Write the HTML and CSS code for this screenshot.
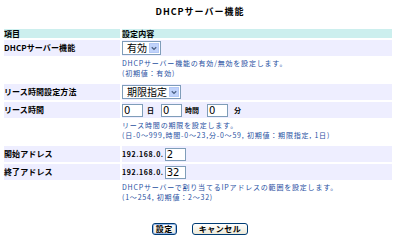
FILE: index.html
```html
<!DOCTYPE html>
<html lang="ja">
<head>
    <meta charset="UTF-8">
    <title>DHCPサーバー機能</title>
    <link rel="stylesheet" href="styles.css">
</head>
<body>
    <h1 class="title">DHCPサーバー機能</h1>

    <table class="settings">
        <tr class="head">
            <td class="label">項目</td>
            <td>設定内容</td>
        </tr>

        <!-- DHCP on/off -->
        <tr class="row">
            <td class="label">DHCPサーバー機能</td>
            <td>
                <span class="select"><span class="select-text">有効</span><span class="select-arrow"><svg width="9" height="9" viewBox="0 0 9 9"><path d="M2 3 L4.5 5.5 L7 3" fill="none" stroke="#4d6185" stroke-width="1.5"/></svg></span></span>
            </td>
        </tr>
        <tr class="desc-row">
            <td></td>
            <td class="desc">DHCPサーバー機能の有効/無効を設定します。<br>(初期値：有効)</td>
        </tr>

        <!-- lease time -->
        <tr class="row">
            <td class="label">リース時間設定方法</td>
            <td>
                <span class="select"><span class="select-text">期限指定</span><span class="select-arrow"><svg width="9" height="9" viewBox="0 0 9 9"><path d="M2 3 L4.5 5.5 L7 3" fill="none" stroke="#4d6185" stroke-width="1.5"/></svg></span></span>
            </td>
        </tr>
        <tr class="row">
            <td class="label">リース時間</td>
            <td>
                <div class="lease">
                    <span class="field">0</span><span class="unit unit-day">日</span>
                    <span class="field">0</span><span class="unit unit-hour">時間</span>
                    <span class="field">0</span><span class="unit unit-min">分</span>
                </div>
            </td>
        </tr>
        <tr class="desc-row">
            <td></td>
            <td class="desc">リース時間の期限を設定します。<br>(日-0～999,時間-0～23,分-0～59, 初期値：期限指定, 1日)</td>
        </tr>

        <!-- address range -->
        <tr class="row">
            <td class="label">開始アドレス</td>
            <td><span class="ip">192.168.0.</span><span class="field">2</span></td>
        </tr>
        <tr class="row">
            <td class="label">終了アドレス</td>
            <td><span class="ip">192.168.0.</span><span class="field">32</span></td>
        </tr>
        <tr class="desc-row">
            <td></td>
            <td class="desc">DHCPサーバーで割り当てるIPアドレスの範囲を設定します。<br>(1～254, 初期値：2～32)</td>
        </tr>
    </table>

    <div class="buttons">
        <button class="btn btn-focus">設定</button>
        <button class="btn btn-cancel">キャンセル</button>
    </div>
</body>
</html>
```

FILE: styles.css
```css
body {
    margin: 0;
    background: #ffffff;
    color: #000000;
    font-family: "Noto Sans CJK JP", "DejaVu Sans", sans-serif;
    font-size: 8px;
}

.title {
    margin: 0;
    padding-top: 6px;
    height: 21px;
    text-align: center;
    font-size: 9px;
    letter-spacing: 1px;
    line-height: 12px;
}

.settings {
    margin-left: 2px;
    width: 392px;
    border-spacing: 2px;
    letter-spacing: 0.1px;
}

.settings td {
    padding: 0;
    vertical-align: middle;
}

.settings .label {
    width: 116px;
    font-weight: bold;
}

.head td {
    background: #ccefee;
    height: 9px;
    line-height: 9px;
    font-weight: bold;
}

.row td {
    background: #eeeeff;
    height: 16px;
    line-height: 12px;
}

.desc-row td {
    vertical-align: top;
}

.desc {
    color: #1f4f9f;
    font-size: 7px;
    letter-spacing: 0.8px;
    line-height: 10px;
    padding-bottom: 4px !important;
    height: 20px;
}

.select {
    display: inline-flex;
    align-items: center;
    height: 12px;
    border: 1px solid #7f9db9;
    background: #ffffff;
    vertical-align: middle;
}

.select-text {
    padding: 0 2px 0 4px;
    font-size: 10px;
    letter-spacing: 0;
}

.select-arrow {
    display: flex;
    align-items: center;
    justify-content: center;
    width: 10px;
    height: 10px;
    margin-right: 1px;
    background: #c1d3fb;
    border: 1px solid #b4c8f6;
    box-sizing: border-box;
}

.lease {
    display: flex;
    align-items: center;
}

.field {
    display: inline-block;
    box-sizing: border-box;
    width: 21px;
    height: 13px;
    border: 1px solid #7f9db9;
    background: #ffffff;
    padding-left: 1px;
    font-family: "DejaVu Sans", sans-serif;
    font-size: 10px;
    line-height: 11px;
    letter-spacing: 0;
    vertical-align: middle;
}

.unit {
    font-size: 7px;
    font-weight: bold;
    letter-spacing: 0;
}

.unit-day {
    margin: 0 7px 0 4px;
}

.unit-hour {
    margin: 0 8px 0 3px;
}

.unit-min {
    margin-left: 6px;
}

.ip {
    display: inline-block;
    margin-right: 1px;
    font-size: 7px;
    font-weight: bold;
    letter-spacing: 0.6px;
    vertical-align: middle;
}

.buttons {
    margin-top: 15px;
    display: flex;
    justify-content: center;
    gap: 15px;
}

.btn {
    height: 12px;
    padding: 0 3px;
    border: 1px solid #003c74;
    border-radius: 3px;
    background: linear-gradient(#ffffff, #ece9d8);
    font-family: "Noto Sans CJK JP", sans-serif;
    font-size: 8px;
    font-weight: bold;
    line-height: 10px;
    letter-spacing: 0.5px;
}

.btn-cancel {
    padding: 0 6px;
}

.btn-focus {
    box-shadow: inset 0 0 0 1px #98b8ea;
}
```
